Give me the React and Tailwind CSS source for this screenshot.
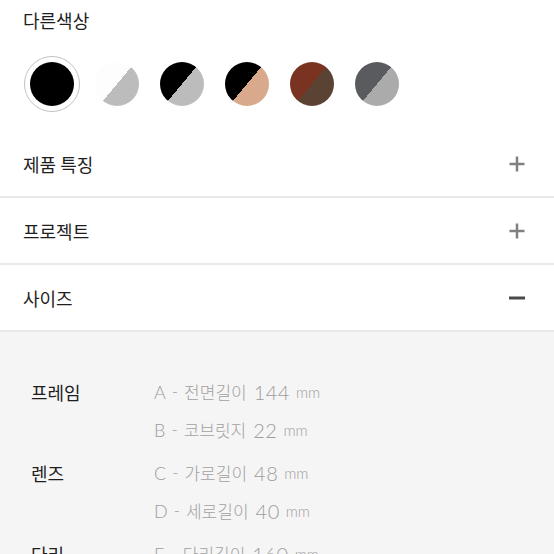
import React from "react";

const KR = { fontFamily: '"Noto Sans CJK KR", "Noto Sans", sans-serif' };
const VAL = { fontFamily: 'Lato, "Noto Sans CJK KR", sans-serif' };

function Plus() {
  return (
    <svg width="16" height="16" viewBox="0 0 16 16">
      <rect x="0.5" y="6.75" width="15" height="2.5" fill="#808080" />
      <rect x="6.75" y="0.5" width="2.5" height="15" fill="#808080" />
    </svg>
  );
}

function Minus() {
  return (
    <svg width="16" height="16" viewBox="0 0 16 16">
      <rect x="0" y="6.5" width="16" height="3" fill="#4a4a4a" />
    </svg>
  );
}

function Row({ label, icon }) {
  return (
    <div className="flex h-[67px] items-center justify-between border-b-2 border-[#e9e9e9] pl-[23px] pr-[29px]">
      <span className="text-[18px] leading-[24px] text-[#1e1e1e]" style={KR}>
        {label}
      </span>
      {icon}
    </div>
  );
}

function Val({ letter, word, num }) {
  return (
    <div className="flex h-[38px] items-center text-[#9d9d9d]" style={VAL}>
      <span className="text-[18px] font-light">{letter}</span>
      <span className="mx-[6px] text-[17px] font-light">-</span>
      <span className="text-[17px] font-light text-[#a2a2a2]" style={KR}>{word}</span>
      <span className="ml-[7px] text-[20px] font-light tracking-[0.5px]">{num}</span>
      <span className="ml-[6px] text-[15px] font-light">mm</span>
    </div>
  );
}

export default function App() {
  return (
    <div className="h-[554px] w-[554px] overflow-hidden bg-white">
      <div className="h-[56px] pl-[23px] pt-[8px]">
        <span className="text-[18px] leading-[24px] text-[#1e1e1e]" style={KR}>
          다른색상
        </span>
      </div>
      <div className="flex h-[56px] gap-[9px] pl-[24px]">
        <div className="flex h-[56px] w-[56px] items-center justify-center rounded-full border-[1.5px] border-[#c2c2c2]">
          <div className="h-[44px] w-[44px] rounded-full bg-black" />
        </div>
        <div className="flex h-[56px] w-[56px] items-center justify-center">
          <div className="h-[44px] w-[44px] rounded-full bg-[linear-gradient(130deg,#fdfdfd_50%,#bcbcbc_50%)]" />
        </div>
        <div className="flex h-[56px] w-[56px] items-center justify-center">
          <div className="h-[44px] w-[44px] rounded-full bg-[linear-gradient(130deg,#000000_50%,#bcbcbc_50%)]" />
        </div>
        <div className="flex h-[56px] w-[56px] items-center justify-center">
          <div className="h-[44px] w-[44px] rounded-full bg-[linear-gradient(130deg,#000000_50%,#d8a98a_50%)]" />
        </div>
        <div className="flex h-[56px] w-[56px] items-center justify-center">
          <div className="h-[44px] w-[44px] rounded-full bg-[linear-gradient(130deg,#7a3320_50%,#5b4334_50%)]" />
        </div>
        <div className="flex h-[56px] w-[56px] items-center justify-center">
          <div className="h-[44px] w-[44px] rounded-full bg-[linear-gradient(130deg,#5a5b5f_50%,#ababab_50%)]" />
        </div>
      </div>
      <div className="mt-[19px]">
        <Row label="제품 특징" icon={<Plus />} />
        <Row label="프로젝트" icon={<Plus />} />
        <Row label="사이즈" icon={<Minus />} />
      </div>
      <div className="bg-[#f5f5f5] pl-[31px] pt-[41px] pb-[40px]">
        <div className="flex flex-col gap-[5px]">
          <div className="grid grid-cols-[123px_1fr]">
            <div className="flex h-[38px] items-center text-[18px] text-[#1e1e1e]" style={KR}>프레임</div>
            <div>
              <Val letter="A" word="전면길이" num="144" />
              <Val letter="B" word="코브릿지" num="22" />
            </div>
          </div>
          <div className="grid grid-cols-[123px_1fr]">
            <div className="flex h-[38px] items-center text-[18px] text-[#1e1e1e]" style={KR}>렌즈</div>
            <div>
              <Val letter="C" word="가로길이" num="48" />
              <Val letter="D" word="세로길이" num="40" />
            </div>
          </div>
          <div className="grid grid-cols-[123px_1fr]">
            <div className="flex h-[38px] items-center text-[18px] text-[#1e1e1e]" style={KR}>다리</div>
            <div>
              <Val letter="E" word="다리길이" num="160" />
            </div>
          </div>
        </div>
      </div>
    </div>
  );
}
